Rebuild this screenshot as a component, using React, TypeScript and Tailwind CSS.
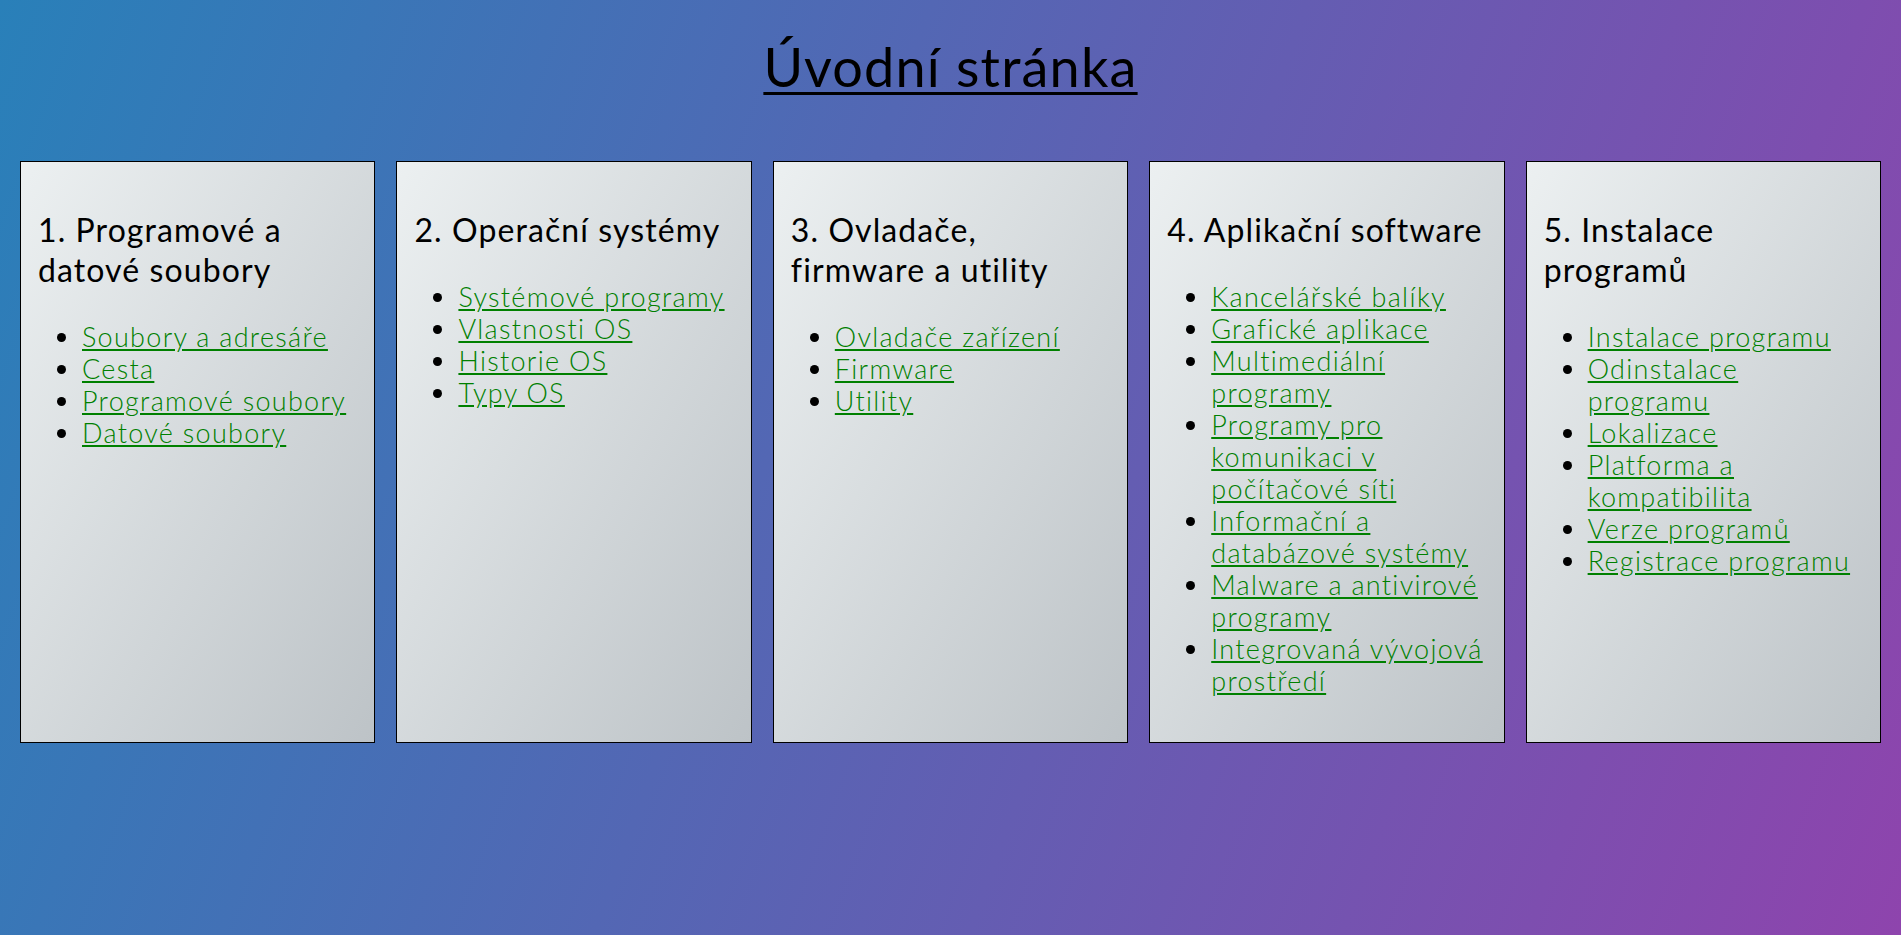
const sections = [
  {
    title: "1. Programové a datové soubory",
    links: ["Soubory a adresáře", "Cesta", "Programové soubory", "Datové soubory"],
  },
  {
    title: "2. Operační systémy",
    links: ["Systémové programy", "Vlastnosti OS", "Historie OS", "Typy OS"],
  },
  {
    title: "3. Ovladače, firmware a utility",
    links: ["Ovladače zařízení", "Firmware", "Utility"],
  },
  {
    title: "4. Aplikační software",
    links: [
      "Kancelářské balíky",
      "Grafické aplikace",
      "Multimediální programy",
      "Programy pro komunikaci v počítačové síti",
      "Informační a databázové systémy",
      "Malware a antivirové programy",
      "Integrovaná vývojová prostředí",
    ],
  },
  {
    title: "5. Instalace programů",
    links: [
      "Instalace programu",
      "Odinstalace programu",
      "Lokalizace",
      "Platforma a kompatibilita",
      "Verze programů",
      "Registrace programu",
    ],
  },
];

function Card({ title, links }: { title: string; links: string[] }) {
  return (
    <div className="flex-1 h-[582px] border border-black bg-[linear-gradient(to_bottom_right,#ecf0f1,#bdc3c7)] px-[17px]">
      <h2 className="mt-[48px] text-[32px] leading-[40px] tracking-[1.1px] text-black">{title}</h2>
      <ul className="mt-[31px] list-disc pl-[44px] text-[27px] leading-[32px] tracking-[1.3px]">
        {links.map((link) => (
          <li key={link}>
            <a href="#" className="text-[#008000] underline font-light">
              {link}
            </a>
          </li>
        ))}
      </ul>
    </div>
  );
}

export default function App() {
  return (
    <div className="min-h-[935px] w-full bg-[linear-gradient(110deg,#2980b9,#8e44ad)] font-['Lato','Open_Sans',sans-serif] overflow-hidden">
      <h1 className="pt-[35px] text-center text-[54px] leading-[64px] tracking-[1.2px] text-black">
        <span className="underline decoration-[3px] underline-offset-[5px]">Úvodní stránka</span>
      </h1>
      <div className="mt-[62px] flex gap-[21px] px-[20px]">
        {sections.map((s) => (
          <Card key={s.title} title={s.title} links={s.links} />
        ))}
      </div>
    </div>
  );
}
